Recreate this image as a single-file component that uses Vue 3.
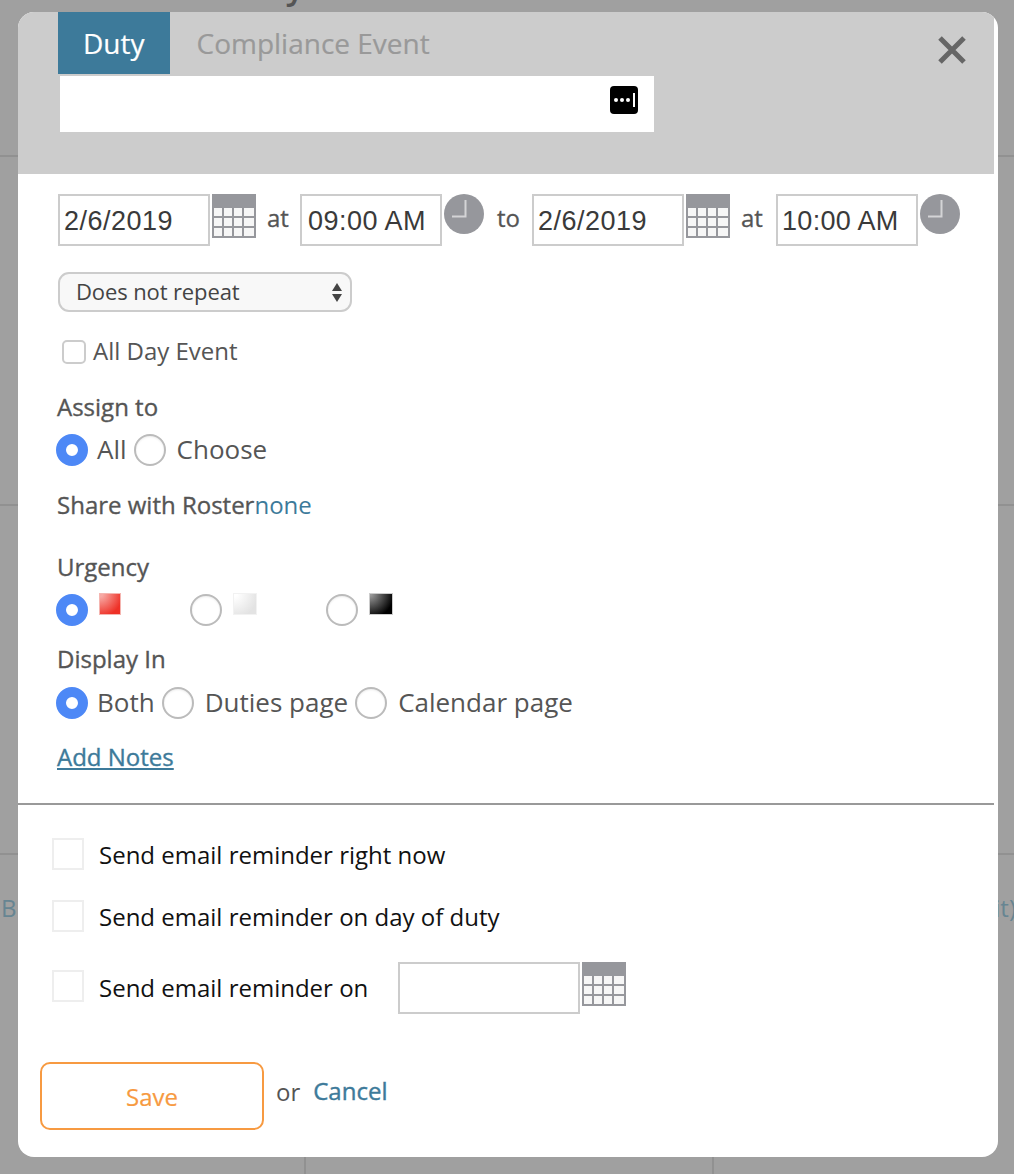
<script setup>
import { ref } from 'vue';

const tab = ref('duty');
const assign = ref('all');
const urgency = ref('red');
const display = ref('both');
const repeat = ref('none');
const startDate = ref('2/6/2019');
const startTime = ref('09:00 AM');
const endDate = ref('2/6/2019');
const endTime = ref('10:00 AM');

const urgencies = ['red', 'grey', 'black'];

// grid cells of the calendar button
const cells = [];
for (let r = 0; r < 3; r++) {
  for (let c = 0; c < 4; c++) {
    cells.push({ x: 2 + c * 10, y: 14 + r * 10, w: c === 3 ? 10 : 8 });
  }
}
</script>

<template>
  <div class="page">
    <!-- page behind the dialog -->
    <div class="backdrop">
      <div class="bg-title">Duty</div>
      <div class="bg-row bg-row-first"></div>
      <div class="bg-row bg-row-second"></div>
      <div class="bg-row bg-row-third"><span>B</span><span>it)</span></div>
      <div class="bg-cols"><i></i><i></i></div>
    </div>

    <div class="modal">
      <div class="modal-head">
        <div class="tabs">
          <button class="tab" :class="{ active: tab === 'duty' }" @click="tab = 'duty'">Duty</button>
          <button class="tab" :class="{ active: tab === 'event' }" @click="tab = 'event'">Compliance Event</button>
        </div>
        <div class="title-wrap">
          <input class="title-input" type="text" />
          <svg class="pw-icon" width="28" height="28" viewBox="0 0 28 28">
            <rect width="28" height="28" rx="4" fill="#000" />
            <circle cx="6" cy="14" r="2" fill="#fff" />
            <circle cx="12" cy="14" r="2" fill="#fff" />
            <circle cx="18" cy="14" r="2" fill="#fff" />
            <rect x="23" y="7" width="2" height="14" fill="#fff" />
          </svg>
        </div>
        <svg class="close" width="30" height="30" viewBox="0 0 30 30">
          <path d="M3 3 L27 27 M27 3 L3 27" stroke="#666" stroke-width="5" fill="none" />
        </svg>
      </div>

      <div class="modal-body">
        <div class="date-row">
          <input class="field date" v-model="startDate" />
          <svg class="cal" width="44" height="44" viewBox="0 0 44 44">
            <rect width="44" height="44" fill="#96979c" />
            <rect v-for="(cell, i) in cells" :key="i" :x="cell.x" :y="cell.y" :width="cell.w" height="8" fill="#f6f6f6" />
          </svg>
          <span class="word at">at</span>
          <input class="field time" v-model="startTime" />
          <svg class="clock" width="40" height="40" viewBox="0 0 40 40">
            <circle cx="20" cy="20" r="20" fill="#96979c" />
            <path d="M21.5 6 V22.5 H8" stroke="#d4d4d6" stroke-width="2" fill="none" />
          </svg>
          <span class="word to">to</span>
          <input class="field date" v-model="endDate" />
          <svg class="cal" width="44" height="44" viewBox="0 0 44 44">
            <rect width="44" height="44" fill="#96979c" />
            <rect v-for="(cell, i) in cells" :key="i" :x="cell.x" :y="cell.y" :width="cell.w" height="8" fill="#f6f6f6" />
          </svg>
          <span class="word at at-end">at</span>
          <input class="field time time-end" v-model="endTime" />
          <svg class="clock" width="40" height="40" viewBox="0 0 40 40">
            <circle cx="20" cy="20" r="20" fill="#96979c" />
            <path d="M21.5 6 V22.5 H8" stroke="#d4d4d6" stroke-width="2" fill="none" />
          </svg>
        </div>

        <div class="select-wrap">
          <select class="repeat" v-model="repeat">
            <option value="none">Does not repeat</option>
            <option value="daily">Daily</option>
            <option value="weekly">Weekly</option>
          </select>
          <svg class="arrows" width="10" height="19" viewBox="0 0 10 19">
            <path d="M5 0 L10 8 H0 Z M5 19 L10 11 H0 Z" fill="#444" />
          </svg>
        </div>

        <label class="allday">
          <input class="check-small" type="checkbox" />
          <span>All Day Event</span>
        </label>

        <div class="label assign-label">Assign to</div>
        <div class="radios assign-row">
          <label class="opt"><input type="radio" value="all" v-model="assign" /><span>All</span></label>
          <label class="opt"><input type="radio" value="choose" v-model="assign" /><span>Choose</span></label>
        </div>

        <div class="label share">Share with Roster<a class="link-none">none</a></div>

        <div class="label urgency-label">Urgency</div>
        <div class="urgency-row">
          <label v-for="u in urgencies" :key="u" class="urgency-opt">
            <input type="radio" :value="u" v-model="urgency" />
            <span class="swatch" :class="u"></span>
          </label>
        </div>

        <div class="label display-label">Display In</div>
        <div class="radios display-row">
          <label class="opt"><input type="radio" value="both" v-model="display" /><span>Both</span></label>
          <label class="opt"><input type="radio" value="duties" v-model="display" /><span>Duties page</span></label>
          <label class="opt"><input type="radio" value="calendar" v-model="display" /><span>Calendar page</span></label>
        </div>

        <a class="add-notes">Add Notes</a>
      </div>

      <div class="divider"></div>

      <div class="reminders">
        <label class="reminder first">
          <input class="check-big" type="checkbox" />
          <span>Send email reminder right now</span>
        </label>
        <label class="reminder second">
          <input class="check-big" type="checkbox" />
          <span>Send email reminder on day of duty</span>
        </label>
        <div class="reminder third">
          <input class="check-big" type="checkbox" />
          <span>Send email reminder on</span>
          <input class="field date remind-date" />
          <svg class="cal" width="44" height="44" viewBox="0 0 44 44">
            <rect width="44" height="44" fill="#96979c" />
            <rect v-for="(cell, i) in cells" :key="i" :x="cell.x" :y="cell.y" :width="cell.w" height="8" fill="#f6f6f6" />
          </svg>
        </div>
      </div>

      <div class="actions">
        <button class="save">Save</button>
        <span class="or">or</span>
        <a class="cancel">Cancel</a>
      </div>
    </div>
  </div>
</template>

<style>
html, body {
  margin: 0;
  background: #a0a0a0;
}
</style>

<style scoped>
* {
  box-sizing: border-box;
}

.page {
  position: relative;
  height: 1174px;
  overflow: hidden;
  padding: 12px 16px 0 18px;
  background: #a0a0a0;
  font-family: "Open Sans", sans-serif;
  color: #555;
}

.backdrop {
  position: absolute;
  inset: 0;
}

.bg-title {
  position: absolute;
  top: -37px;
  left: 226px;
  font-size: 34px;
  line-height: 46px;
  font-weight: 600;
  color: #555;
}

.bg-row {
  border-bottom: 2px solid #919191;
}

.bg-row-first {
  height: 157px;
}

.bg-row-second {
  height: 349px;
}

.bg-row-third {
  height: 347px;
  border-bottom: 0;
  box-shadow: 0 2px 0 #919191;
}

.bg-row-third span {
  position: absolute;
  top: 892px;
  left: 1px;
  font-size: 24px;
  line-height: 32px;
  color: #678592;
}

.bg-row-third span + span {
  left: auto;
  right: -2px;
}

.bg-cols {
  position: absolute;
  left: 0;
  top: 1150px;
  bottom: 0;
  width: 100%;
}

.bg-cols i {
  position: absolute;
  top: 0;
  bottom: 0;
  width: 2px;
  background: #919191;
  left: 304px;
}

.bg-cols i + i {
  left: 712px;
}

.modal {
  position: relative;
  width: 980px;
  height: 1145px;
  background: #fff;
  border-radius: 16px;
  overflow: hidden;
}

.modal-head {
  position: relative;
  width: 976px;
  height: 162px;
  background: #ccc;
  padding-left: 40px;
}

.tabs {
  display: flex;
  height: 62px;
}

.tab {
  border: 0;
  margin: 0;
  padding: 0 27px;
  background: transparent;
  font-family: "Open Sans", sans-serif;
  font-size: 28px;
  line-height: 62px;
  color: #999;
  -webkit-text-stroke: 0.2px currentColor;
}

.tab.active {
  background: #3d7a9a;
  color: #fff;
  padding: 0 25px;
}

.title-wrap {
  position: relative;
  width: 594px;
  height: 56px;
  margin: 2px 0 0 2px;
}

.title-input {
  display: block;
  width: 100%;
  height: 100%;
  border: 0;
  padding: 0 10px;
  background: #fff;
  outline: none;
}

.pw-icon {
  position: absolute;
  top: 10px;
  right: 16px;
}

.close {
  position: absolute;
  top: 23px;
  right: 27px;
}

.modal-body {
  padding: 20px 0 0 40px;
}

.date-row {
  display: flex;
  align-items: flex-start;
  height: 52px;
}

.field {
  height: 52px;
  border: 2px solid #ccc;
  padding: 3px 0 0 4px;
  background: #fff;
  font-family: "Liberation Sans", sans-serif;
  font-size: 27px;
  letter-spacing: 0.5px;
  color: #3a3a3a;
  outline: none;
}

.date {
  width: 152px;
}

.time {
  width: 142px;
  padding-left: 6px;
}

.time-end {
  padding-left: 4px;
  letter-spacing: 0.3px;
}

.cal {
  flex: none;
  margin-left: 2px;
}

.clock {
  flex: none;
  margin-left: 2px;
}

.word {
  font-size: 24px;
  line-height: 48px;
  color: #555;
  -webkit-text-stroke: 0.3px currentColor;
}

.at {
  margin-left: 11px;
  width: 33px;
}

.at-end {
  width: 35px;
}

.to {
  margin-left: 13px;
  width: 35px;
}

.select-wrap {
  position: relative;
  width: 294px;
  height: 40px;
  margin-top: 26px;
}

.repeat {
  appearance: none;
  display: block;
  width: 100%;
  height: 100%;
  border: 2px solid #ccc;
  border-radius: 11px;
  padding: 0 0 2px 16px;
  background: #f8f8f8;
  font-family: "Open Sans", sans-serif;
  font-size: 22px;
  letter-spacing: -0.12px;
  color: #444;
  outline: none;
}

.arrows {
  position: absolute;
  top: 11px;
  right: 10px;
}

.allday {
  display: flex;
  align-items: center;
  height: 40px;
  margin: 20px 0 0 4px;
  font-size: 24px;
  gap: 7px;
}

.allday span {
  padding-bottom: 4px;
}

.check-small {
  appearance: none;
  width: 24px;
  height: 24px;
  margin: 0;
  border: 2px solid #ccc;
  border-radius: 5px;
  background: #fff;
}

.label {
  height: 32px;
  margin-left: -1px;
  font-size: 24px;
  line-height: 30px;
  color: #555;
  -webkit-text-stroke: 0.35px currentColor;
}

.assign-label {
  margin-top: 20px;
}

.radios {
  display: flex;
  align-items: center;
  height: 32px;
  margin-left: -2px;
  font-size: 26px;
  gap: 7px;
}

.opt {
  display: flex;
  align-items: center;
  gap: 11px;
}

.opt:first-child {
  gap: 9px;
}

.opt span {
  padding-bottom: 2px;
}

input[type="radio"] {
  appearance: none;
  flex: none;
  width: 32px;
  height: 32px;
  margin: 0;
  border: 2px solid #bbb;
  border-radius: 50%;
  background: #fff;
  box-shadow: inset 0 1px 2px rgba(0, 0, 0, 0.08);
}

input[type="radio"]:checked {
  border: 10px solid #4d88f6;
  box-shadow: none;
}

.assign-row {
  margin-top: 10px;
}

.share {
  margin-top: 24px;
}

.link-none {
  color: #3d7a9a;
  -webkit-text-stroke: 0;
}

.urgency-label {
  margin-top: 30px;
}

.urgency-row {
  display: flex;
  height: 32px;
  margin: 10px 0 0 -2px;
}

.urgency-opt {
  display: flex;
  align-items: flex-start;
  gap: 11px;
  width: 134px;
}

.urgency-opt + .urgency-opt {
  width: 136px;
}

.swatch {
  width: 22px;
  height: 22px;
  margin-top: -1px;
  border: 1px solid #f5b5b0;
  background: radial-gradient(circle at 0 0, #f7a9a4 10%, #ee3026 80%);
}

.swatch.grey {
  width: 24px;
  border-color: #f2f2f2;
  background: radial-gradient(circle at 0 0, #fff 10%, #e3e3e3 80%);
}

.swatch.black {
  width: 24px;
  border-color: #ccc;
  background: radial-gradient(circle at 0 0, #999 5%, #000 80%);
}

.display-label {
  margin-top: 18px;
}

.display-row {
  margin-top: 11px;
}

.add-notes {
  display: block;
  width: fit-content;
  height: 32px;
  margin: 23px 0 0 -1px;
  font-size: 24px;
  line-height: 30px;
  color: #3d7a9a;
  text-decoration: underline;
  -webkit-text-stroke: 0.35px currentColor;
}

.divider {
  width: 976px;
  height: 2px;
  margin-top: 29px;
  background: #999;
}

.reminders {
  padding-left: 34px;
}

.reminder {
  display: flex;
  align-items: center;
  font-size: 24px;
  color: #111;
  gap: 15px;
}

.first {
  height: 32px;
  margin-top: 33px;
}

.second {
  height: 32px;
  margin-top: 30px;
}

.third {
  height: 52px;
  margin-top: 30px;
}

.third span {
  position: relative;
  top: -1px;
}

.check-big {
  appearance: none;
  flex: none;
  width: 32px;
  height: 32px;
  margin: 0;
  border: 2px solid #eee;
  background: #fff;
}

.third .check-big {
  margin-bottom: 4px;
}

.remind-date {
  width: 182px;
  margin-left: 15px;
}

.third .cal {
  align-self: flex-start;
  margin-left: -13px;
}

.actions {
  display: flex;
  align-items: flex-start;
  margin: 48px 0 0 22px;
}

.save {
  width: 224px;
  height: 68px;
  border: 2px solid #f79a41;
  border-radius: 10px;
  background: #fff;
  font-family: "Open Sans", sans-serif;
  font-size: 24px;
  color: #f79a41;
  padding-top: 2px;
  -webkit-text-stroke: 0.2px currentColor;
}

.or {
  margin: 14px 0 0 12px;
  font-size: 24px;
  line-height: 32px;
}

.cancel {
  margin: 13px 0 0 13px;
  font-size: 24px;
  line-height: 32px;
  color: #3d7a9a;
  -webkit-text-stroke: 0.4px currentColor;
}
</style>
